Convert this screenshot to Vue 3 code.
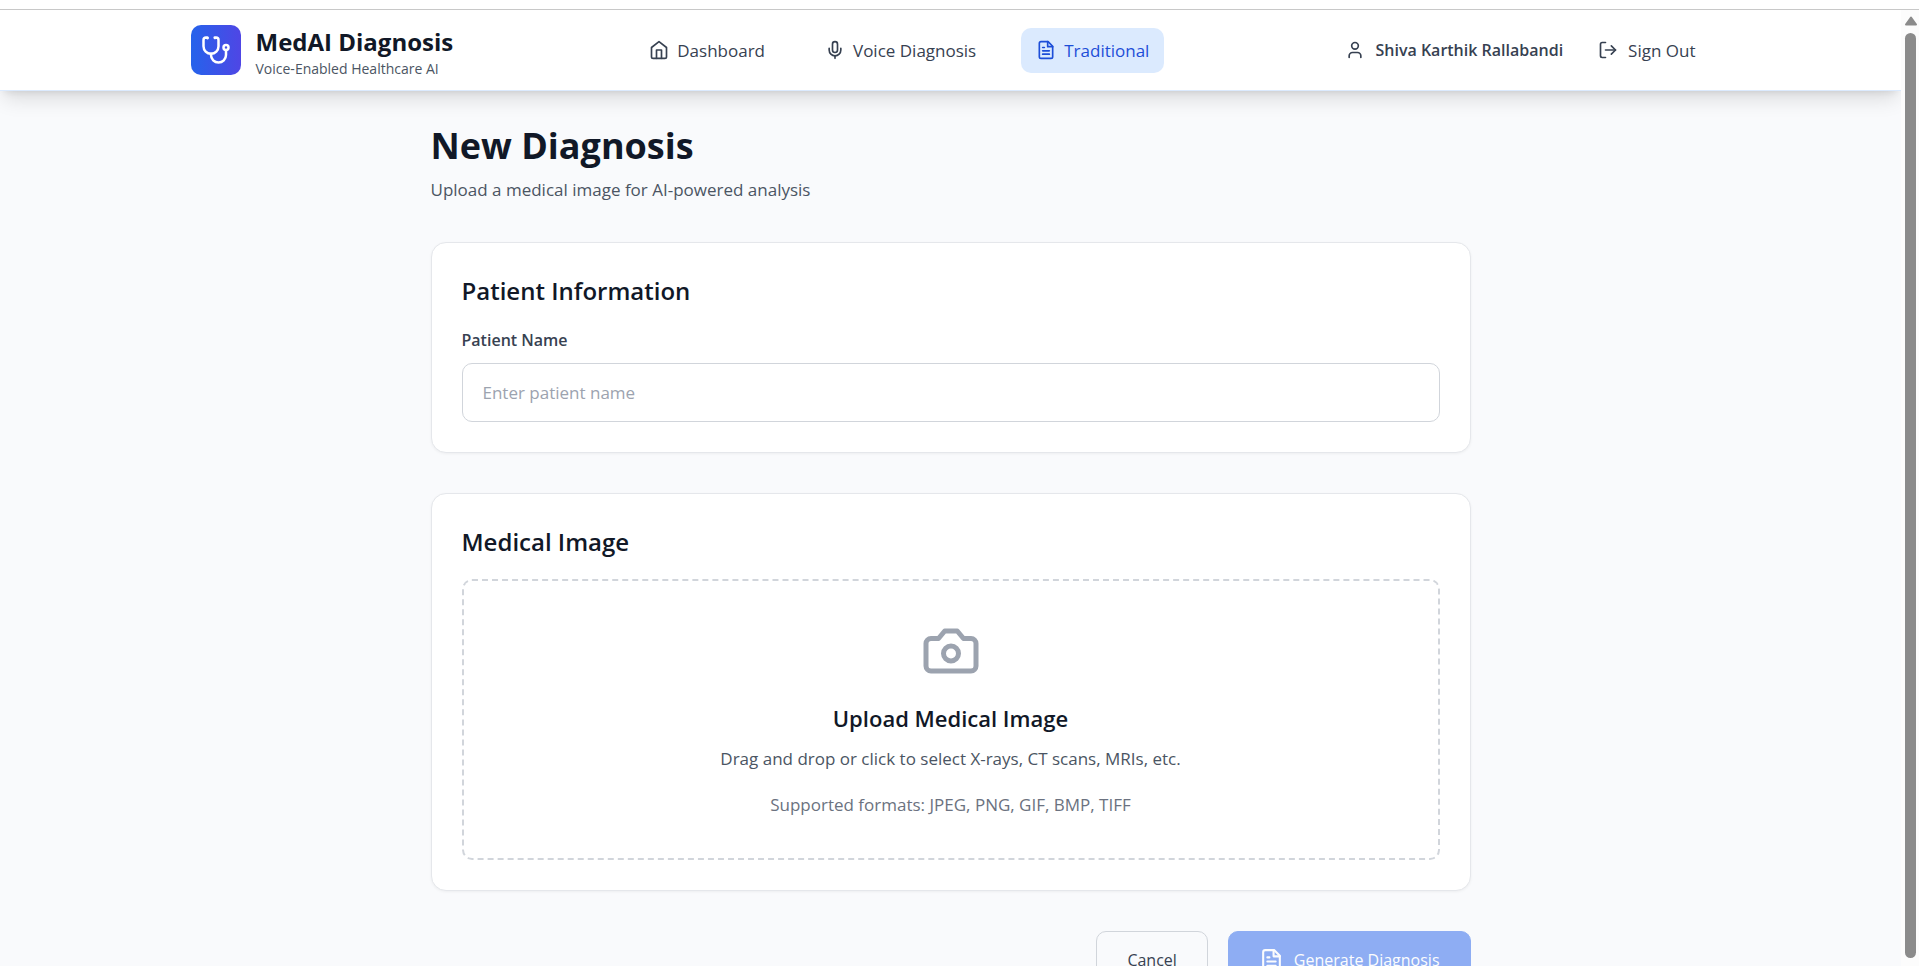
<template>
  <div class="window">
    <div class="window__edge" />

    <div class="window__view">
      <div class="page">
        <!-- Header -->
        <header class="header">
          <div class="header__inner">
            <a href="#" class="brand">
              <span class="brand__logo">
                <svg class="icon icon--lg" viewBox="0 0 24 24">
                  <path d="M4.8 2.3A.3.3 0 1 0 5 2H4a2 2 0 0 0-2 2v5a6 6 0 0 0 6 6a6 6 0 0 0 6-6V4a2 2 0 0 0-2-2h-1a.2.2 0 1 0 .3.3" />
                  <path d="M8 15v1a6 6 0 0 0 6 6a6 6 0 0 0 6-6v-4" />
                  <circle cx="20" cy="10" r="2" />
                </svg>
              </span>
              <span class="brand__text">
                <span class="brand__name">MedAI Diagnosis</span>
                <span class="brand__tagline">Voice-Enabled Healthcare AI</span>
              </span>
            </a>

            <nav class="nav">
              <a
                v-for="link in links"
                :key="link.id"
                :href="`#${link.id}`"
                class="nav__link"
                :class="{ 'nav__link--active': link.id === current }"
              >
                <svg class="icon" viewBox="0 0 24 24">
                  <path v-for="d in link.paths" :key="d" :d="d" />
                </svg>
                {{ link.label }}
              </a>
            </nav>

            <div class="account">
              <div class="account__user">
                <svg class="icon" viewBox="0 0 24 24">
                  <path d="M19 21v-2a4 4 0 0 0-4-4H9a4 4 0 0 0-4 4v2" />
                  <circle cx="12" cy="7" r="4" />
                </svg>
                <span>Shiva Karthik Rallabandi</span>
              </div>
              <button type="button" class="account__signout">
                <svg class="icon" viewBox="0 0 24 24">
                  <path d="M9 21H5a2 2 0 0 1-2-2V5a2 2 0 0 1 2-2h4" />
                  <path d="M16 17l5-5-5-5" />
                  <path d="M21 12H9" />
                </svg>
                Sign Out
              </button>
            </div>
          </div>
        </header>

        <!-- Diagnosis form -->
        <main class="main">
          <h1 class="title">New Diagnosis</h1>
          <p class="subtitle">Upload a medical image for AI-powered analysis</p>

          <form class="form" @submit.prevent>
            <section class="card">
              <h2 class="card__title">Patient Information</h2>
              <label for="patient-name" class="label">Patient Name</label>
              <input
                id="patient-name"
                v-model="patientName"
                type="text"
                class="input"
                placeholder="Enter patient name"
              />
            </section>

            <section class="card">
              <h2 class="card__title">Medical Image</h2>
              <label class="dropzone" for="medical-image" @dragover.prevent @drop.prevent="onDrop">
                <input
                  id="medical-image"
                  type="file"
                  accept="image/*"
                  class="dropzone__file"
                  @change="onSelect"
                />
                <svg class="icon icon--xl" viewBox="0 0 24 24">
                  <path d="M14.5 4h-5L7 7H4a2 2 0 0 0-2 2v9a2 2 0 0 0 2 2h16a2 2 0 0 0 2-2V9a2 2 0 0 0-2-2h-3l-2.5-3z" />
                  <circle cx="12" cy="13" r="3" />
                </svg>
                <span class="dropzone__title">Upload Medical Image</span>
                <span class="dropzone__hint">Drag and drop or click to select X-rays, CT scans, MRIs, etc.</span>
                <span class="dropzone__formats">Supported formats: JPEG, PNG, GIF, BMP, TIFF</span>
              </label>
            </section>

            <div class="actions">
              <button type="button" class="btn btn--ghost">Cancel</button>
              <button type="submit" class="btn btn--primary" :disabled="!ready">
                <svg class="icon icon--md" viewBox="0 0 24 24">
                  <path v-for="d in filePaths" :key="d" :d="d" />
                </svg>
                Generate Diagnosis
              </button>
            </div>
          </form>
        </main>
      </div>

      <!-- Scrollbar -->
      <div class="scrollbar">
        <svg class="scrollbar__arrow" viewBox="0 0 14 10">
          <path d="M7 1.5L12 8.5H2z" />
        </svg>
        <div class="scrollbar__thumb" />
      </div>
    </div>
  </div>
</template>

<script setup>
import { computed, ref } from 'vue'

const filePaths = [
  'M14.5 2H6a2 2 0 0 0-2 2v16a2 2 0 0 0 2 2h12a2 2 0 0 0 2-2V7.5L14.5 2z',
  'M14 2v6h6',
  'M16 13H8',
  'M16 17H8',
  'M10 9H8',
]

const links = [
  {
    id: 'dashboard',
    label: 'Dashboard',
    paths: ['M3 9l9-7 9 7v11a2 2 0 0 1-2 2H5a2 2 0 0 1-2-2z', 'M9 22V12h6v10'],
  },
  {
    id: 'voice',
    label: 'Voice Diagnosis',
    paths: [
      'M12 2a3 3 0 0 0-3 3v7a3 3 0 0 0 6 0V5a3 3 0 0 0-3-3Z',
      'M19 10v2a7 7 0 0 1-14 0v-2',
      'M12 19v3',
    ],
  },
  { id: 'traditional', label: 'Traditional', paths: filePaths },
]

const current = ref('traditional')
const patientName = ref('')
const image = ref(null)

const ready = computed(() => patientName.value.trim() !== '' && image.value !== null)

function onSelect(event) {
  image.value = event.target.files[0] ?? null
}

function onDrop(event) {
  image.value = event.dataTransfer.files[0] ?? null
}
</script>

<style>
body {
  margin: 0;
  background: #ffffff;
}
</style>

<style scoped>
*, *::before, *::after { box-sizing: border-box; margin: 0; padding: 0; }

.window {
  --ink: #111827;
  --text: #374151;
  --muted: #4b5563;
  --line: #d1d5db;
  --blue: #2563eb;

  height: 100vh;
  display: flex;
  flex-direction: column;
  overflow: hidden;
  color: var(--ink);
  font-family: 'Segoe UI', 'Open Sans', 'Noto Sans', sans-serif;
  font-size: 17px;
  line-height: 25px;
}

.window__edge {
  flex: none;
  height: 10px;
  border-bottom: 1px solid #c8c8c8;
}

.window__view {
  flex: 1;
  min-height: 0;
  display: flex;
}

.page {
  flex: 1;
  min-width: 0;
  overflow: hidden;
  background: #f9fafc;
}

button, input { font: inherit; }
a { color: inherit; text-decoration: none; }

/* ── Icons ── */
.icon {
  flex: none;
  width: 20px;
  height: 20px;
  fill: none;
  stroke: currentColor;
  stroke-width: 2;
  stroke-linecap: round;
  stroke-linejoin: round;
}

.icon--md { width: 25px; height: 25px; }
.icon--lg { width: 30px; height: 30px; }
.icon--xl { width: 60px; height: 60px; color: #9ca3af; }

/* ── Header ── */
.header {
  position: relative;
  background: #ffffff;
  border-bottom: 1px solid #dbeafe;
  box-shadow: 0 12px 19px -4px rgba(0, 0, 0, 0.12), 0 5px 8px -5px rgba(0, 0, 0, 0.12);
}

.header__inner {
  max-width: 1600px;
  height: 80px;
  margin: 0 auto;
  padding: 0 40px;
  display: flex;
  align-items: center;
  justify-content: space-between;
}

.brand {
  display: flex;
  align-items: center;
  gap: 15px;
}

.brand__logo {
  width: 50px;
  height: 50px;
  display: flex;
  align-items: center;
  justify-content: center;
  border-radius: 10px;
  background: linear-gradient(to right, #2563eb, #4f46e5);
  color: #ffffff;
}

.brand__text {
  display: flex;
  flex-direction: column;
  padding-top: 3px;
}

.brand__name {
  font-size: 24px;
  font-weight: 700;
  line-height: 35px;
}

.brand__tagline {
  font-size: 14px;
  line-height: 20px;
  color: var(--muted);
}

.nav {
  display: flex;
  gap: 30px;
}

.nav__link {
  display: flex;
  align-items: center;
  gap: 8px;
  padding: 10px 15px;
  border-radius: 10px;
  color: var(--text);
}

.nav__link--active {
  background: #dbeafe;
  color: #1d4ed8;
}

.account {
  display: flex;
  align-items: center;
  gap: 20px;
  color: var(--text);
}

.account__user {
  display: flex;
  align-items: center;
  gap: 10px;
  font-size: 16px;
  font-weight: 600;
}

.account__signout {
  display: flex;
  align-items: center;
  gap: 10px;
  padding: 10px 15px;
  border: 0;
  border-radius: 10px;
  background: none;
  color: inherit;
  cursor: pointer;
}

/* ── Main ── */
.main {
  max-width: 1120px;
  margin: 0 auto;
  padding: 32px 40px;
}

.title {
  margin-bottom: 8px;
  font-size: 36px;
  font-weight: 700;
  line-height: 46px;
}

.subtitle {
  margin-bottom: 40px;
  color: var(--muted);
}

.form {
  display: flex;
  flex-direction: column;
  gap: 40px;
}

.card {
  padding: 30px;
  border: 1px solid #e5e7eb;
  border-radius: 15px;
  background: #ffffff;
  box-shadow: 0 1px 3px rgba(0, 0, 0, 0.05);
}

.card__title {
  margin-bottom: 20px;
  font-size: 24px;
  font-weight: 600;
  line-height: 35px;
}

.label {
  display: block;
  margin-bottom: 10px;
  font-size: 16px;
  font-weight: 600;
  color: var(--text);
}

.input {
  display: block;
  width: 100%;
  padding: 16px 20px;
  border: 1px solid var(--line);
  border-radius: 10px;
  background: #ffffff;
  color: var(--ink);
}

.input::placeholder { color: #9ca3af; }

/* ── Dropzone ── */
.dropzone {
  display: flex;
  flex-direction: column;
  align-items: center;
  padding: 40px;
  border: 2px dashed var(--line);
  border-radius: 10px;
  text-align: center;
  cursor: pointer;
}

.dropzone__file {
  position: absolute;
  width: 1px;
  height: 1px;
  opacity: 0;
}

.dropzone__title {
  margin-top: 20px;
  font-size: 22px;
  font-weight: 600;
  line-height: 35px;
}

.dropzone__hint {
  margin-top: 10px;
  line-height: 26px;
  color: var(--muted);
}

.dropzone__formats {
  margin-top: 20px;
  line-height: 26px;
  color: #6b7280;
}

/* ── Actions ── */
.actions {
  display: flex;
  justify-content: flex-end;
  gap: 20px;
}

.btn {
  display: flex;
  align-items: center;
  gap: 10px;
  padding: 15px 30px;
  border: 1px solid transparent;
  border-radius: 10px;
  font-size: 16px;
  line-height: 26px;
  cursor: pointer;
}

.btn--ghost {
  border-color: var(--line);
  background: none;
  color: var(--text);
}

.btn--primary {
  border-color: var(--blue);
  background: var(--blue);
  color: #ffffff;
}

.btn--primary:disabled {
  opacity: 0.5;
  cursor: not-allowed;
}

/* ── Scrollbar ── */
.scrollbar {
  flex: none;
  width: 18px;
  padding: 6px 3px 8px 4px;
  display: flex;
  flex-direction: column;
  align-items: center;
  gap: 7px;
  background: #fcfcfc;
}

.scrollbar__arrow {
  flex: none;
  width: 14px;
  height: 10px;
  fill: #8b8b8b;
  stroke: #8b8b8b;
  stroke-width: 2;
  stroke-linejoin: round;
}

.scrollbar__thumb {
  flex: 1;
  width: 11px;
  border-radius: 6px;
  background: #8b8b8b;
}
</style>
